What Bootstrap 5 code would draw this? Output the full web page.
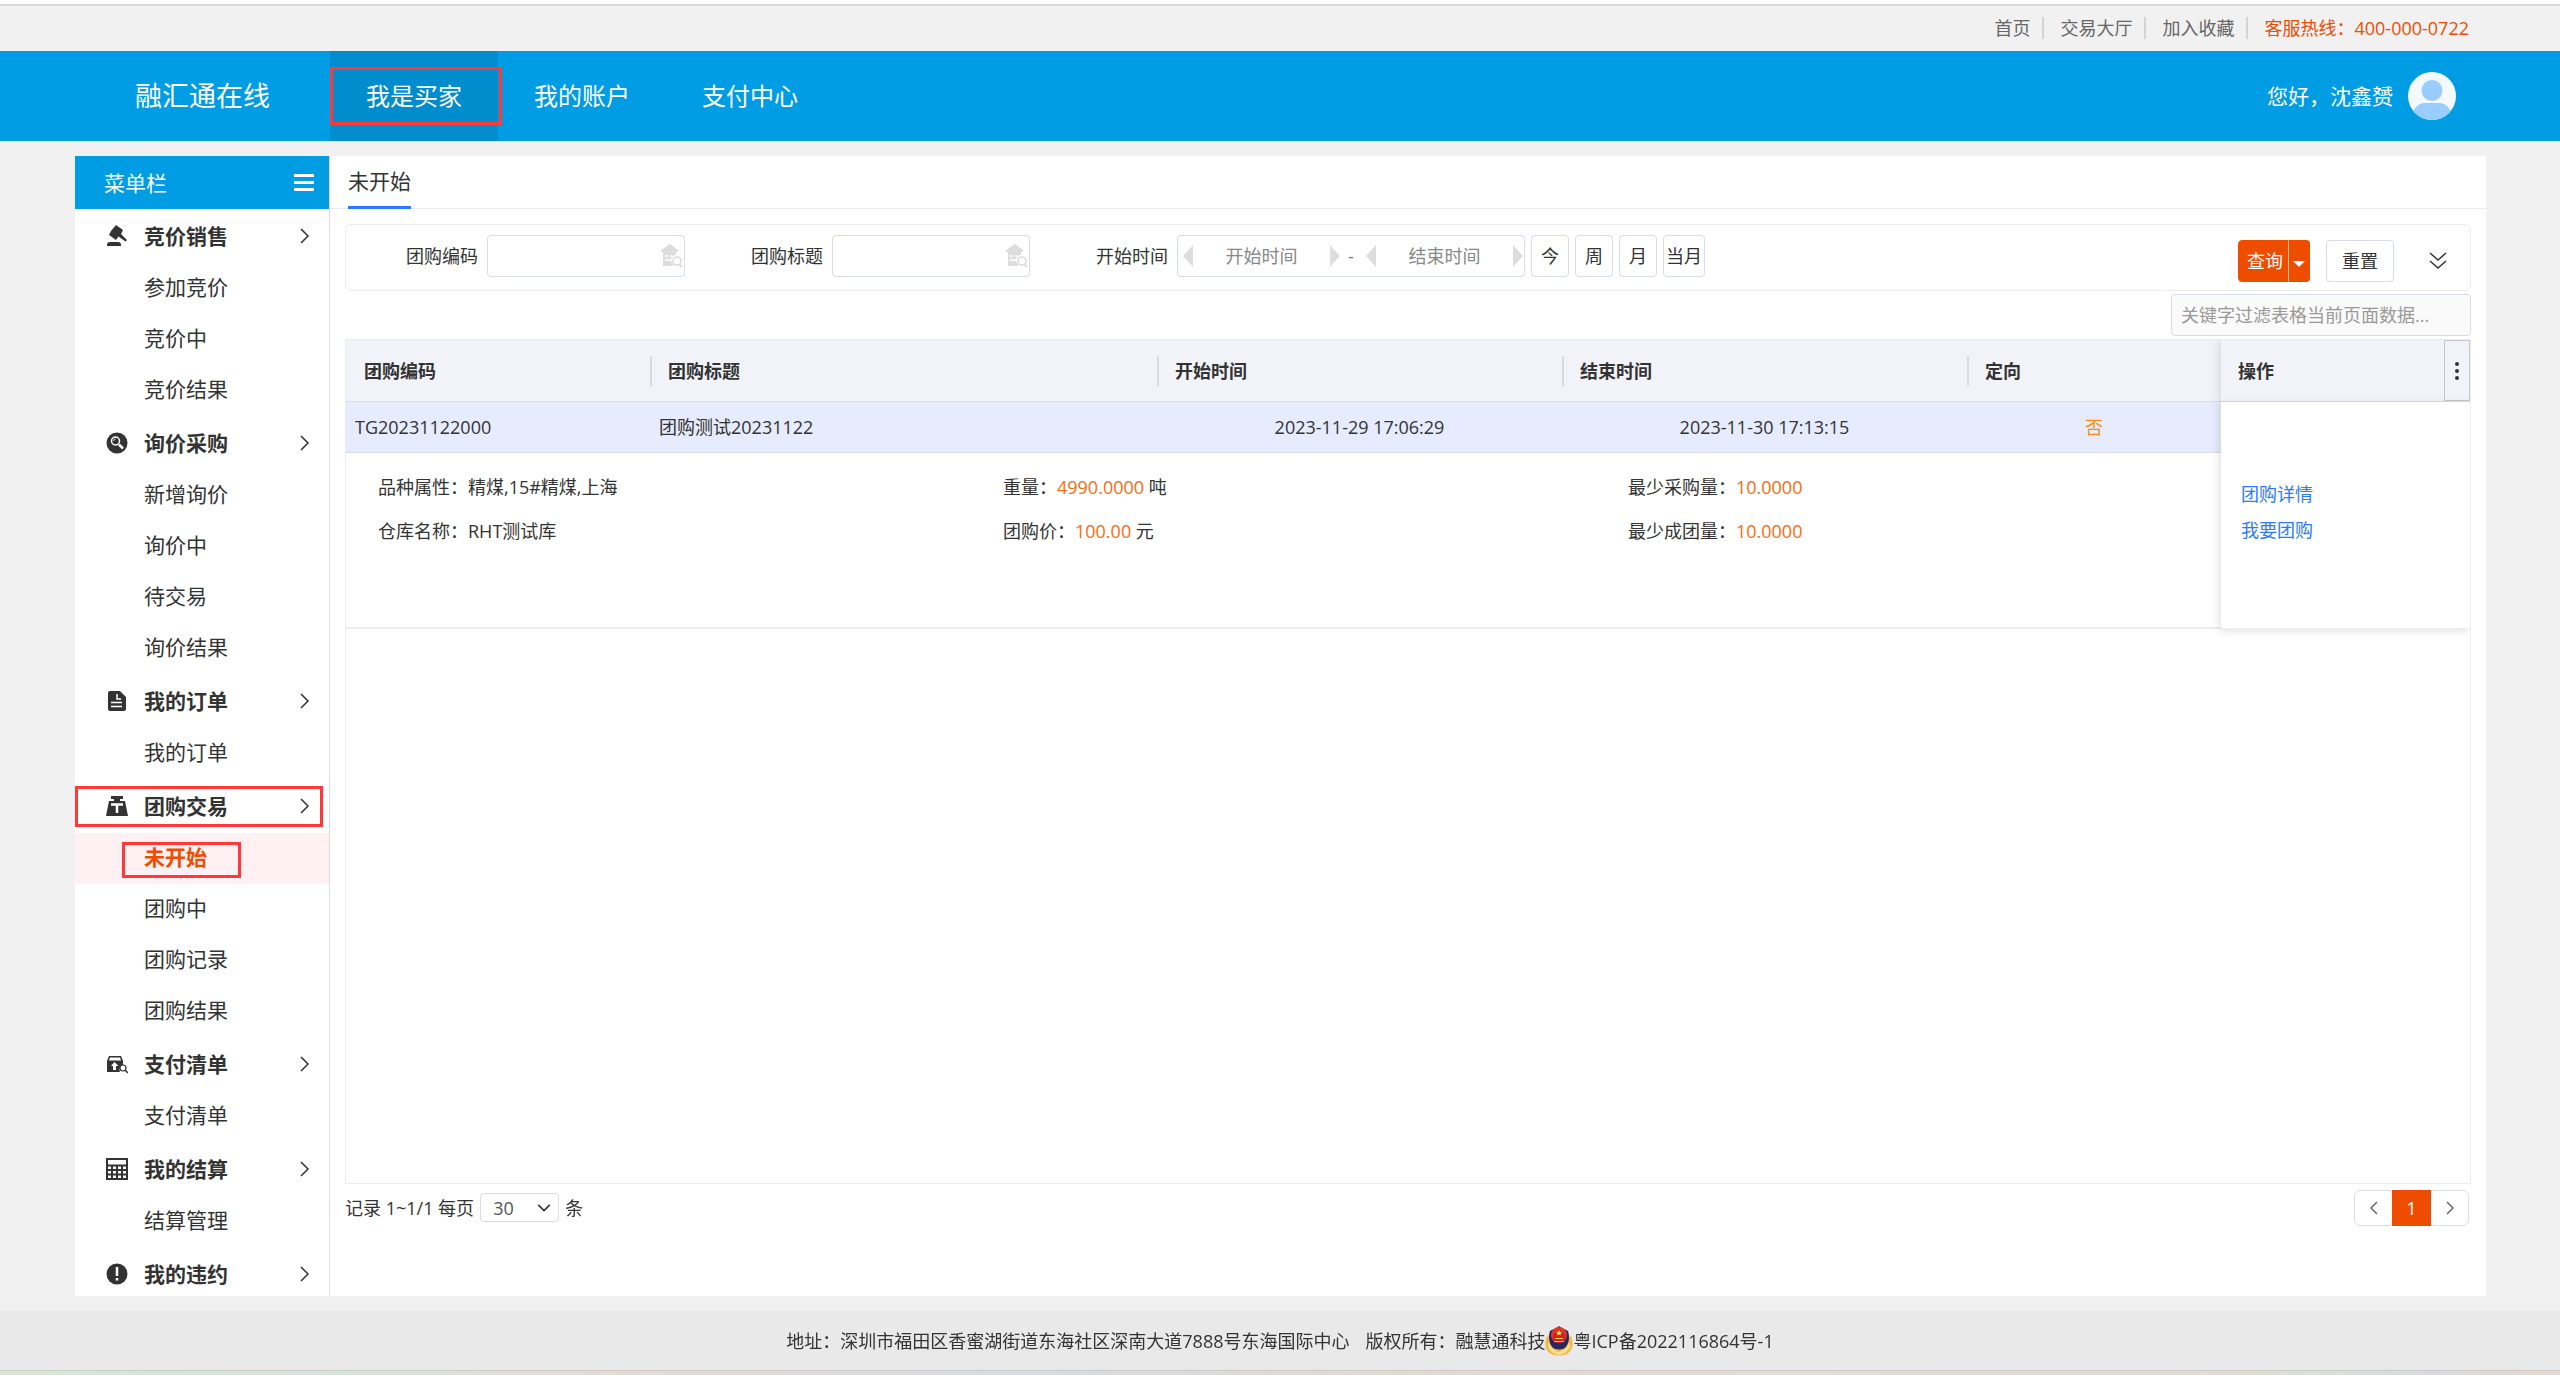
<!DOCTYPE html>
<html lang="zh-CN">
<head>
<meta charset="utf-8">
<meta name="viewport" content="width=device-width, initial-scale=1">
<title>融汇通在线 - 未开始</title>
<link href="https://cdn.jsdelivr.net/npm/bootstrap@5.3.0/dist/css/bootstrap.min.css" rel="stylesheet">
<style>
  :root { --brand: #009de5; --accent: #ee4d00; --line: #ebedf0; --field: #d8dce6; --ink: #333; }
  body { font-family: "Open Sans", "Noto Sans CJK SC", sans-serif; font-size: 18px; line-height: 26px; color: var(--ink); background: #f1f1f1; height: 100vh; }
  a { text-decoration: none; color: inherit; }
  svg { display: block; flex: none; }

  .top-edge { height: 6px; background: #fff; border-bottom: 2px solid #d9d9d9; }
  .topbar { height: 45px; padding: 0 91px 2px 0; color: #666; }
  .topbar a + a { border-left: 2px solid #d4d4d4; }
  .topbar a { line-height: 22px; padding: 0 12px 0 16px; }
  .topbar a:last-child { padding-right: 0; }
  .topbar .hotline { color: var(--accent); }

  .site-header { height: 90px; background: var(--brand); color: #fff; padding-right: 104px; }
  .site-brand { width: 330px; padding-left: 135px; font-size: 27px; }
  .main-nav .nav-link { width: 168px; height: 90px; padding: 0; color: #fff; font-size: 24px; }
  .main-nav .nav-link.active { background: #008ccd; }
  .hello { font-size: 21px; gap: 15px; }
  .callout-box { border: 3px solid #ff3838; position: absolute; pointer-events: none; }
  .callout-nav { inset: 16px -4px 16px 0; }
  .callout-group { inset: 7px 6px 6px 0; }
  .callout-item { left: 47px; width: 119px; top: 9px; bottom: 6px; }

  .workspace { margin: 15px 74px 15px 75px; min-height: 0; }
  .side { width: 255px; background: #fff; border-right: 1px solid #dcdcdc; overflow-y: auto; flex: none; }
  .side::-webkit-scrollbar { display: none; }
  .side-head { height: 53px; background: var(--brand); color: #fff; font-size: 21px; padding: 0 15px 0 29px; }
  .side-group { height: 54px; font-size: 21px; font-weight: 700; padding: 0 19px 0 31px; width: 100%; background: none; border: 0; color: var(--ink); }
  .side-group span { flex: 1; text-align: left; padding-left: 16px; }
  .side-item { height: 51px; font-size: 21px; padding: 0 0 3px 69px; }
  .side-item.active { background: #fff1f3; color: var(--accent); font-weight: 700; }

  .content { background: #fff; min-width: 0; }
  .tabs-line { height: 53px; border-bottom: 1px solid var(--line); padding-left: 18px; font-size: 21px; }
  .tabs-line a { height: 53px; border-bottom: 3px solid #2b7bff; }
  .content-body { padding: 15px 15px 70px 15px; min-height: 0; }

  .filters { height: 67px; border: 1px solid var(--line); border-radius: 6px; padding: 0 22px 3px 60px; }
  .filters label { margin-right: 9px; }
  .filters .field + label { margin-left: 66px; }
  .field { border: 1px solid var(--field); border-radius: 4px; background: #fff; height: 42px; }
  .field input { border: 0; background: none; outline: 0; min-width: 0; color: #333; }
  .field input::placeholder { color: #888; opacity: 1; }
  .lookup { width: 198px; padding-right: 1px; }
  .range { width: 348px; padding: 0 1px 0 5px; color: #777; }
  .range input { width: 120px; text-align: center; padding: 0; flex: 1; }
  .quick-set { gap: 6px; margin-left: 6px; }
  .quick { height: 42px; min-width: 38px; border: 1px solid var(--field); border-radius: 4px; background: #fff; padding: 0 2px; color: var(--ink); }
  .filter-actions { padding-top: 10px; }
  .btn-query { --bs-btn-color: #fff; --bs-btn-bg: var(--accent); --bs-btn-border-color: var(--accent); --bs-btn-hover-bg: #d94600; --bs-btn-hover-color: #fff; height: 42px; font-size: 18px; line-height: 24px; padding: 0 5px 0 8px; border-radius: 4px; }
  .btn-query.dropdown-toggle { padding: 0 4px; border-left: 1px solid #ffb48f; }
  .btn-query.dropdown-toggle::after { border-width: 6px 6px 0; vertical-align: 1px; margin: 0; }
  .btn-plain { height: 42px; width: 68px; font-size: 18px; line-height: 24px; padding: 0; border: 1px solid var(--field); border-radius: 4px; background: #fff; color: var(--ink); }
  .keyword { width: 300px; height: 42px; border: 1px solid var(--field); border-radius: 4px; background: #fafafa; padding: 0 9px; margin: 3px 0; }
  .keyword::placeholder { color: #999; opacity: 1; }

  .grid-box { border: 1px solid var(--line); flex: 1; min-height: 0; overflow: hidden; }
  .grid { table-layout: fixed; border-collapse: separate; border-spacing: 0; width: 100%; margin: 0; }
  .c-code { width: 304px; }
  .c-title { width: 507px; }
  .c-time { width: 405px; }
  .c-ops { width: 249px; }
  .grid th { height: 62px; background: #f2f3f9; border-bottom: 1px solid var(--field); padding: 0 18px; font-weight: 700; }
  .grid th + th:not(.ops) { background: linear-gradient(#d8dade, #d8dade) 0 50% / 2px 30px no-repeat #f2f3f9; }
  .grid td { padding: 0; }
  .row-main td { height: 51px; background: #e6ecfd; border-bottom: 1px solid var(--field); padding: 0 9px; }
  .row-main td.ops { background: #fff; padding: 0 20px 6px; border-bottom: 1px solid var(--line); }
  .grid .ops { position: relative; box-shadow: -2px 2px 8px rgba(0,0,0,.12); }
  .grid th.ops { padding: 0 0 0 17px; box-shadow: -2px 0 8px rgba(0,0,0,.12); }
  .row-detail td { height: 176px; border-bottom: 2px solid var(--line); padding: 12px 0 12px 32px; vertical-align: top; }
  .detail-grid { margin-right: -32px; }
  .row-detail .col-4 { line-height: 44px; }
  .row-detail b { font-weight: 400; color: #ff6a0d; }
  .row-main .no-flag { color: #ff8c0d; }
  .op-link { color: #2b7bff; line-height: 36px; }
  .cell-menu { width: 26px; height: 61px; background: none; border: 1px solid #c8c8cc; padding: 0; }

  .pager-row { padding: 5px 2px 0 0; height: 42px; }
  .page-size { width: 79px; height: 29px; padding: 0 12px; margin: 0 6px; font-size: 18px; line-height: 26px; border: 1px solid var(--field); border-radius: 4px; color: #555; background-position: right 6px center; background-size: 16px 14px; }
  .pager-row .page-link { width: 39px; height: 36px; padding: 0; border-color: #ddd; color: #666; border-radius: 4px; font-size: 18px; }
  .pager-row .page-item.active .page-link { background: var(--accent); border-color: var(--accent); color: #fff; border-radius: 0; }

  .site-footer { height: 59px; background: #e9e9e9; }
  .bottom-edge { height: 5px; border-top: 1px solid #ccc; background: linear-gradient(90deg, #d9e6d4, #d3e5dc 12%, #e6d9d2 24%, #d6dce2 40%, #e6d8c8 60%, #e3dccf 70%, #e2dccb 86%, #d6e0d8 91%, #d9d9dd 95%, #e8d8cd); }
</style>
<script src="https://cdn.jsdelivr.net/npm/bootstrap@5.3.0/dist/js/bootstrap.bundle.min.js"></script>
</head>
<body class="d-flex flex-column m-0">
<svg width="0" height="0" class="position-absolute" aria-hidden="true">
  <symbol id="chev" viewBox="0 0 10 18"><path d="M1 2l7 7-7 7" fill="none" stroke="#333" stroke-width="1.5"/></symbol>
  <symbol id="house" viewBox="0 0 22 24"><path fill="#ddd" d="M9 0l8 6v2H15v3a5 5 0 0 0-3 9v2H2V8H0V6z"/><path stroke="#fff" stroke-width="1.5" d="M4 12h3m2 0h2M4 16h6"/><circle cx="16" cy="17" r="4" fill="#fff" stroke="#ddd" stroke-width="1.6"/><path d="M18 20l3 3" stroke="#ddd" stroke-width="2"/></symbol>
  <symbol id="tri-l" viewBox="0 0 10 22"><path fill="#ddd" d="M10 0v22L0 11z"/></symbol>
  <symbol id="tri-r" viewBox="0 0 10 22"><path fill="#ddd" d="M0 0v22l10-11z"/></symbol>
</svg>

<div class="top-edge flex-shrink-0"></div>
<div class="topbar d-flex justify-content-end align-items-center flex-shrink-0">
  <a href="#">首页</a><a href="#">交易大厅</a><a href="#">加入收藏</a><a href="#" class="hotline">客服热线：400-000-0722</a>
</div>

<header class="site-header d-flex align-items-center flex-shrink-0">
  <a class="site-brand" href="#">融汇通在线</a>
  <nav class="nav main-nav">
    <a class="nav-link active position-relative d-flex align-items-center justify-content-center" href="#">我是买家<i class="callout-box callout-nav"></i></a>
    <a class="nav-link d-flex align-items-center justify-content-center" href="#">我的账户</a>
    <a class="nav-link d-flex align-items-center justify-content-center" href="#">支付中心</a>
  </nav>
  <div class="hello d-flex align-items-center ms-auto">您好，沈鑫赟
    <svg width="48" height="48" viewBox="0 0 48 48"><clipPath id="av"><circle cx="24" cy="24" r="24"/></clipPath><g clip-path="url(#av)"><path fill="#f3f9ff" d="M0 0h48v48H0z"/><circle cx="24" cy="18.500" r="10.500" fill="#9cf"/><path fill="#9cf" d="M3 48c1-11 7-17 14-17h14c7 0 13 6 14 17z"/></g></svg>
  </div>
</header>

<main class="workspace d-flex flex-grow-1">
  <aside class="side">
    <div class="side-head d-flex align-items-center justify-content-between">菜单栏
      <svg width="20" height="18" viewBox="0 0 20 18"><path d="M0 1.500h20M0 8.500h20M0 15.500h20" stroke="#fff" stroke-width="3"/></svg>
    </div>
    <button class="side-group d-flex align-items-center" type="button"><svg width="22" height="22" viewBox="0 0 22 22"><path fill="#333" d="M1 21v-1q0-3 3-3h8q3 0 3 3v1zM10 0l7 5-2 4 6 6-1.500 1.500-7-5L10 15 3 10l2-4z"/></svg><span>竞价销售</span><svg width="10" height="18"><use href="#chev"/></svg></button>
    <a class="side-item d-flex align-items-center" href="#">参加竞价</a>
    <a class="side-item d-flex align-items-center" href="#">竞价中</a>
    <a class="side-item d-flex align-items-center" href="#">竞价结果</a>
    <button class="side-group d-flex align-items-center" type="button"><svg width="22" height="22" viewBox="0 0 22 22"><circle cx="11" cy="11" r="10.500" fill="#333"/><g fill="none" stroke="#fff"><circle cx="9.500" cy="9" r="4" stroke-width="1.500"/><path d="M13 12.500l4 4" stroke-width="2.500"/><path d="M7.500 9a2 2 0 0 1 2-2" stroke-width=".8"/></g></svg><span>询价采购</span><svg width="10" height="18"><use href="#chev"/></svg></button>
    <a class="side-item d-flex align-items-center" href="#">新增询价</a>
    <a class="side-item d-flex align-items-center" href="#">询价中</a>
    <a class="side-item d-flex align-items-center" href="#">待交易</a>
    <a class="side-item d-flex align-items-center" href="#">询价结果</a>
    <button class="side-group d-flex align-items-center" type="button"><svg width="22" height="22" viewBox="0 0 22 22"><path fill="#333" d="M4 1h10l6 6v12q0 2-2 2H4q-2 0-2-2V3q0-2 2-2z"/><path fill="none" stroke="#fff" stroke-width="1.500" d="M11 4v5h4M5 12.500h11M5 16.500h11"/></svg><span>我的订单</span><svg width="10" height="18"><use href="#chev"/></svg></button>
    <a class="side-item d-flex align-items-center" href="#">我的订单</a>
    <button class="side-group position-relative d-flex align-items-center" type="button"><svg width="22" height="22" viewBox="0 0 22 22"><path fill="#333" d="M5 1h12v3h-3v2h5l3 15H0L3 6h5V4H5z"/><path fill="none" stroke="#fff" stroke-width="2.500" d="M5 9.500h12M11 9v9"/></svg><span>团购交易</span><svg width="10" height="18"><use href="#chev"/></svg><i class="callout-box callout-group"></i></button>
    <a class="side-item position-relative active d-flex align-items-center" href="#">未开始<i class="callout-box callout-item"></i></a>
    <a class="side-item d-flex align-items-center" href="#">团购中</a>
    <a class="side-item d-flex align-items-center" href="#">团购记录</a>
    <a class="side-item d-flex align-items-center" href="#">团购结果</a>
    <button class="side-group d-flex align-items-center" type="button"><svg width="22" height="22" viewBox="0 0 22 22"><path fill="#333" d="M3 3h12l2 5v4a5 5 0 0 0-3 7H1V8z"/><path fill="#fff" d="M4 4.500h10l1 3H3zM8.500 9l4 4H10v4H7v-4H5z"/><circle cx="17" cy="15" r="3" fill="#fff" stroke="#333" stroke-width="1.200"/><path d="M19 17l3 3" stroke="#333" stroke-width="1.500"/></svg><span>支付清单</span><svg width="10" height="18"><use href="#chev"/></svg></button>
    <a class="side-item d-flex align-items-center" href="#">支付清单</a>
    <button class="side-group d-flex align-items-center" type="button"><svg width="22" height="22" viewBox="0 0 22 22"><path fill="none" stroke="#333" stroke-width="2" d="M1 1h20v20H1zM1 7.500h20M1 12h20M1 16.500h20M6 8v13M11 8v13M16 8v13"/></svg><span>我的结算</span><svg width="10" height="18"><use href="#chev"/></svg></button>
    <a class="side-item d-flex align-items-center" href="#">结算管理</a>
    <button class="side-group d-flex align-items-center" type="button"><svg width="22" height="22" viewBox="0 0 22 22"><circle cx="11" cy="11" r="10.500" fill="#333"/><path d="M11 4v9M11 15v2.500" stroke="#fff" stroke-width="2.500"/></svg><span>我的违约</span><svg width="10" height="18"><use href="#chev"/></svg></button>
  </aside>

  <section class="content d-flex flex-column flex-grow-1">
    <div class="tabs-line d-flex flex-shrink-0"><a class="d-flex align-items-center" href="#">未开始</a></div>
    <div class="content-body d-flex flex-column flex-grow-1">
      <form class="filters d-flex align-items-center flex-shrink-0">
        <label for="code">团购编码</label>
        <div class="field lookup d-flex align-items-center"><input id="code" type="text" class="flex-grow-1"><svg width="22" height="24"><use href="#house"/></svg></div>
        <label for="title">团购标题</label>
        <div class="field lookup d-flex align-items-center"><input id="title" type="text" class="flex-grow-1"><svg width="22" height="24"><use href="#house"/></svg></div>
        <label for="from">开始时间</label>
        <div class="field range d-flex align-items-center">
          <svg width="10" height="22"><use href="#tri-l"/></svg><input id="from" type="text" placeholder="开始时间"><svg width="10" height="22"><use href="#tri-r"/></svg>
          <span class="px-2">-</span>
          <svg width="10" height="22" class="ms-1"><use href="#tri-l"/></svg><input type="text" aria-label="结束时间" placeholder="结束时间"><svg width="10" height="22"><use href="#tri-r"/></svg>
        </div>
        <div class="quick-set d-flex">
          <button type="button" class="quick">今</button><button type="button" class="quick">周</button><button type="button" class="quick">月</button><button type="button" class="quick">当月</button>
        </div>
        <div class="filter-actions d-flex align-items-center ms-auto">
          <div class="btn-group"><button type="button" class="btn btn-query">查询</button><button type="button" class="btn btn-query dropdown-toggle" aria-label="更多查询"></button></div>
          <button type="reset" class="btn-plain ms-3">重置</button>
          <svg class="ms-4" width="30" height="18" viewBox="0 0 30 18"><path d="M12 1l8 7 8-7M12 9l8 7 8-7" fill="none" stroke="#333" stroke-width="1.500"/></svg>
        </div>
      </form>
      <div class="d-flex justify-content-end flex-shrink-0"><input class="keyword" type="text" aria-label="关键字过滤" placeholder="关键字过滤表格当前页面数据..."></div>

      <div class="grid-box">
        <table class="grid">
          <colgroup><col class="c-code"><col class="c-title"><col class="c-time"><col class="c-time"><col><col class="c-ops"></colgroup>
          <thead><tr><th>团购编码</th><th>团购标题</th><th>开始时间</th><th>结束时间</th><th>定向</th>
            <th class="ops"><div class="d-flex align-items-center justify-content-between">操作
              <button type="button" class="cell-menu d-flex align-items-center justify-content-center" aria-label="列设置"><svg width="4" height="18" viewBox="0 0 4 18"><g fill="#333"><circle cx="2" cy="2" r="2"/><circle cx="2" cy="9" r="2"/><circle cx="2" cy="16" r="2"/></g></svg></button></div></th></tr></thead>
          <tbody>
            <tr class="row-main"><td>TG20231122000</td><td>团购测试20231122</td><td class="text-center">2023-11-29 17:06:29</td><td class="text-center">2023-11-30 17:13:15</td><td class="text-center no-flag">否</td>
              <td class="ops" rowspan="2"><a class="op-link d-block" href="#">团购详情</a><a class="op-link d-block" href="#">我要团购</a></td></tr>
            <tr class="row-detail"><td colspan="5">
              <div class="row gx-0 detail-grid">
                <div class="col-4">品种属性：精煤,15#精煤,上海</div><div class="col-4">重量：<b>4990.0000</b> 吨</div><div class="col-4">最少采购量：<b>10.0000</b></div>
                <div class="col-4">仓库名称：RHT测试库</div><div class="col-4">团购价：<b>100.00</b> 元</div><div class="col-4">最少成团量：<b>10.0000</b></div>
              </div></td></tr>
          </tbody>
        </table>
      </div>

      <div class="pager-row d-flex align-items-center flex-shrink-0">
        <label for="size">记录 1~1/1 每页</label>
        <select id="size" class="form-select page-size"><option>30</option></select>条
        <ul class="pagination ms-auto mb-0">
          <li class="page-item"><a class="page-link d-flex align-items-center justify-content-center" href="#" aria-label="上一页"><svg width="8" height="14" viewBox="0 0 8 14"><path d="M7 1L1 7l6 6" fill="none" stroke="#666" stroke-width="1.500"/></svg></a></li>
          <li class="page-item active"><a class="page-link d-flex align-items-center justify-content-center" href="#">1</a></li>
          <li class="page-item"><a class="page-link d-flex align-items-center justify-content-center" href="#" aria-label="下一页"><svg width="8" height="14" viewBox="0 0 8 14"><path d="M1 1l6 6-6 6" fill="none" stroke="#666" stroke-width="1.500"/></svg></a></li>
        </ul>
      </div>
    </div>
  </section>
</main>

<footer class="site-footer d-flex align-items-center justify-content-center flex-shrink-0">
  <span class="me-3">地址：深圳市福田区香蜜湖街道东海社区深南大道7888号东海国际中心</span><span>版权所有：融慧通科技</span>
  <svg width="28" height="30" viewBox="0 0 28 30"><path fill="#eebb4e" d="M3 9c-4 6-4 15 3 19 5 2 11 2 16 0 7-4 7-13 3-19l-3 9H6z"/><path fill="#f8dd8c" d="M4 16c2 6 6 9 10 10 4-1 8-4 10-10l1 4c-2 6-6 8-11 9-5-1-9-3-11-9z"/><path fill="#25295d" d="M14 0c3 3 6 3 9 5 2 6 1 13-3 17-4 2-8 2-12 0C4 18 3 11 5 5c3-2 6-2 9-5z"/><ellipse cx="14" cy="9" rx="8" ry="8" fill="#e0342a"/><circle cx="14" cy="11" r="6" fill="#dc1c1c"/><path fill="#f7d54a" d="M14 4l1 2h2l-1.500 1.500.5 2-2-1-2 1 .5-2L11 6h2zM10 12h8v1h-8zM9 15h10v1H9z"/></svg>
  <a href="#">粤ICP备2022116864号-1</a>
</footer>
<div class="bottom-edge flex-shrink-0"></div>
</body>
</html>
